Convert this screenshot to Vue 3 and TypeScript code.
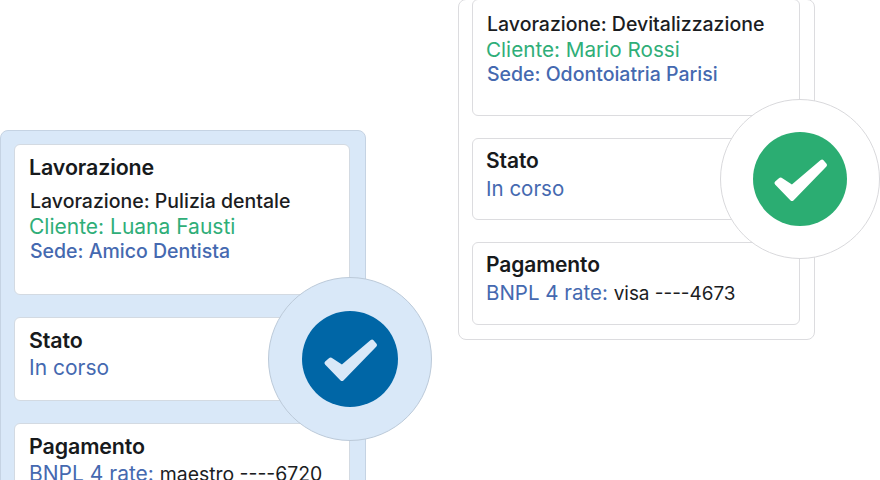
<script setup lang="ts">
interface Order {
  lavorazione: string
  cliente: string
  sede: string
  card: string
  theme: string
}

const orders: Order[] = [
  {
    lavorazione: 'Pulizia dentale',
    cliente: 'Luana Fausti',
    sede: 'Amico Dentista',
    card: 'maestro ----6720',
    theme: 'blue',
  },
  {
    lavorazione: 'Devitalizzazione',
    cliente: 'Mario Rossi',
    sede: 'Odontoiatria Parisi',
    card: 'visa ----4673',
    theme: 'green',
  },
]
</script>

<template>
  <div class="stage">
    <div v-for="order in orders" :key="order.theme" class="panel" :class="order.theme">
      <section class="card card-main">
        <h3 v-if="order.theme === 'blue'">Lavorazione</h3>
        <p class="line strong">Lavorazione: {{ order.lavorazione }}</p>
        <p class="line client">Cliente: {{ order.cliente }}</p>
        <p class="line site">Sede: {{ order.sede }}</p>
      </section>
      <section class="card">
        <h3>Stato</h3>
        <p class="status">In corso</p>
      </section>
      <section class="card">
        <h3>Pagamento</h3>
        <p class="status">BNPL 4 rate: <span class="pay">{{ order.card }}</span></p>
      </section>
      <div class="badge">
        <div class="badge-dot">
          <svg viewBox="0 0 56 46" class="tick" aria-hidden="true">
            <path d="M4.5 27 L8.5 23.5 L20 31 L50 5.5 L53 9 L20 43 Z" fill="currentColor" stroke="currentColor" stroke-width="4" stroke-linejoin="round" />
          </svg>
        </div>
      </div>
    </div>
  </div>
</template>

<style>
html,
body {
  margin: 0;
  background: #fff;
  overflow: hidden;
}
</style>

<style scoped>
.stage {
  width: 880px;
  height: 480px;
  overflow: hidden;
  display: flex;
  align-items: flex-start;
  gap: 92px;
  font-family: Inter, "Liberation Sans", sans-serif;
  color: #171a1c;
}

.panel {
  position: relative;
  box-sizing: border-box;
  display: flex;
  flex-direction: column;
  gap: 22px;
  border-radius: 8px;
  flex: none;
}

.panel.blue {
  width: 366px;
  margin-top: 130px;
  background: #d9e8f8;
  border: 1px solid #c5d3e3;
  padding: 13px 15px 0 13px;
}

.panel.green {
  width: 357px;
  height: 341px;
  margin-top: -1px;
  justify-content: flex-end;
  background: #fff;
  border: 1px solid #dcdcdf;
  padding: 0 14px 14px 13px;
}

.card {
  box-sizing: border-box;
  height: 84px;
  padding: 9px 14px;
  background: #fff;
  border: 1px solid #d3dae2;
  border-radius: 6px;
}

.green .card {
  height: 83px;
  padding-left: 13px;
  border-color: #dcdcdf;
}

.blue .card-main {
  height: 151px;
}

.green .card-main {
  height: 117px;
  padding-top: 12px;
  margin-top: -1px;
}

h3 {
  margin: 0;
  font-size: 21.4px;
  line-height: 26px;
  font-weight: 600;
  letter-spacing: -0.1px;
}

.green h3 {
  font-size: 21px;
}

p {
  margin: 0;
}

.blue .strong {
  margin-top: 9px;
}

.line {
  line-height: 25px;
}

.strong {
  margin-left: 1px;
  font-size: 19.5px;
  font-weight: 500;
  color: #1b1d1f;
}

.client {
  font-size: 21px;
  font-weight: 400;
  color: #2fae78;
}

.green .client {
  font-size: 20.7px;
}

.site {
  margin-left: 1px;
  font-size: 19.5px;
  font-weight: 500;
  color: #4569b0;
}

.status {
  margin-top: 1px;
  font-size: 21px;
  line-height: 28px;
  color: #4569b0;
}

.green .status {
  font-size: 20.5px;
}

.pay {
  font-size: 19.4px;
  color: #1b1d1f;
}

.green .pay {
  font-size: 18.9px;
}

.badge {
  position: absolute;
  box-sizing: border-box;
  display: flex;
  align-items: center;
  justify-content: center;
  border-radius: 50%;
}

.blue .badge {
  width: 164px;
  height: 164px;
  left: 267px;
  top: 146px;
  background: #d9e8f8;
  border: 1px solid #bccad9;
}

.green .badge {
  width: 160px;
  height: 160px;
  left: 261px;
  top: 99px;
  background: #fff;
  border: 1px solid #d9d9dc;
}

.badge-dot {
  display: flex;
  align-items: center;
  justify-content: center;
  width: 96px;
  height: 96px;
  border-radius: 50%;
}

.blue .badge-dot {
  background: #0066a6;
  color: #d9e8f8;
}

.green .badge-dot {
  width: 94px;
  height: 94px;
  background: #2bad72;
  color: #fff;
}

.tick {
  width: 56px;
  height: 46px;
}
</style>
